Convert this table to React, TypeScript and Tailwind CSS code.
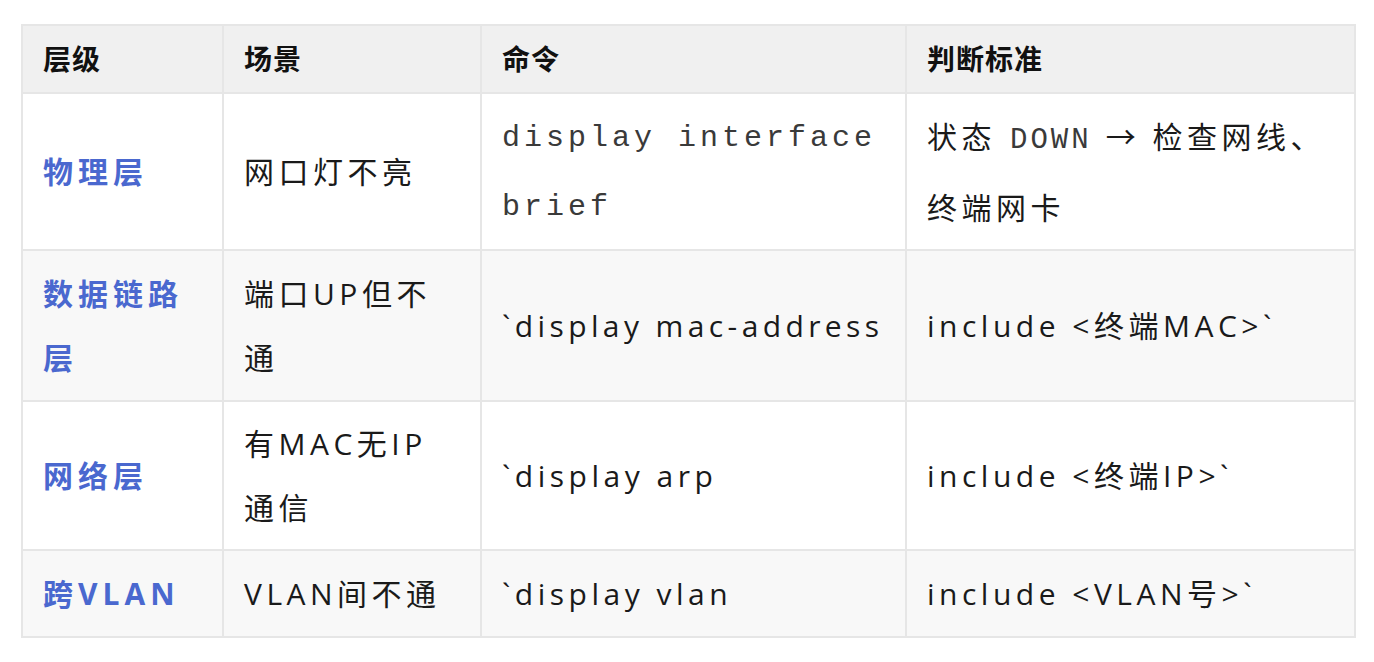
import React from 'react';

const body = "font-['Open_Sans','Noto_Sans_CJK_SC',sans-serif]";
const mono = "font-['Liberation_Mono','Noto_Sans_CJK_SC',monospace]";

type Row = {
  layer: string;
  scene: React.ReactNode;
  cmd: React.ReactNode;
  judge: React.ReactNode;
  h: string;
  bg: string;
};

const rows: Row[] = [
  {
    layer: '物理层',
    scene: '网口灯不亮',
    cmd: (
      <span className={`${mono} text-[30px] leading-[67px] tracking-[4px] text-[#3a3a3a]`}>
        display interface brief
      </span>
    ),
    judge: (
      <div className="leading-[67px]">
        <div className="whitespace-nowrap">
          <span>状态</span>
          <span className={`${mono} mx-[14px] text-[29px] tracking-[3px] text-[#3a3a3a]`}>DOWN</span>
          <span>→ 检查网线、</span>
        </div>
        <div>终端网卡</div>
      </div>
    ),
    h: 'h-[157px]',
    bg: 'bg-white',
  },
  {
    layer: '数据链路层',
    scene: '端口UP但不通',
    cmd: <span className="whitespace-nowrap tracking-[4.4px]">`display mac-address</span>,
    judge: 'include <终端MAC>`',
    h: 'h-[151px]',
    bg: 'bg-[#f8f8f8]',
  },
  {
    layer: '网络层',
    scene: (
      <>
        有MAC无IP
        <br />
        通信
      </>
    ),
    cmd: '`display arp',
    judge: 'include <终端IP>`',
    h: 'h-[149px]',
    bg: 'bg-white',
  },
  {
    layer: '跨VLAN',
    scene: 'VLAN间不通',
    cmd: '`display vlan',
    judge: 'include <VLAN号>`',
    h: 'h-[87px]',
    bg: 'bg-[#f8f8f8]',
  },
];

const th = 'border-2 border-[#e6e6e6] px-[20px] text-left align-middle text-[28px] font-bold tracking-[1px] text-[#111]';
const td = 'border-2 border-[#e6e6e6] px-[20px] align-middle text-[30px] leading-[64px] tracking-[4.5px] text-[#1a1a1a]';

export default function App() {
  return (
    <div className={`min-h-screen bg-white pl-[21px] pt-[24px] ${body}`}>
      <table className="w-[1333px] table-fixed border-collapse">
        <colgroup>
          <col className="w-[201px]" />
          <col className="w-[258px]" />
          <col className="w-[425px]" />
          <col className="w-[449px]" />
        </colgroup>
        <thead>
          <tr className="h-[68px] bg-[#f0f0f0]">
            <th className={th}>层级</th>
            <th className={th}>场景</th>
            <th className={th}>命令</th>
            <th className={th}>判断标准</th>
          </tr>
        </thead>
        <tbody>
          {rows.map((r, i) => (
            <tr key={i} className={`${r.h} ${r.bg}`}>
              <td className={`${td} font-bold tracking-[5px] text-[#4a68cf]`}>{r.layer}</td>
              <td className={td}>{r.scene}</td>
              <td className={td}>{r.cmd}</td>
              <td className={td}>{r.judge}</td>
            </tr>
          ))}
        </tbody>
      </table>
    </div>
  );
}
